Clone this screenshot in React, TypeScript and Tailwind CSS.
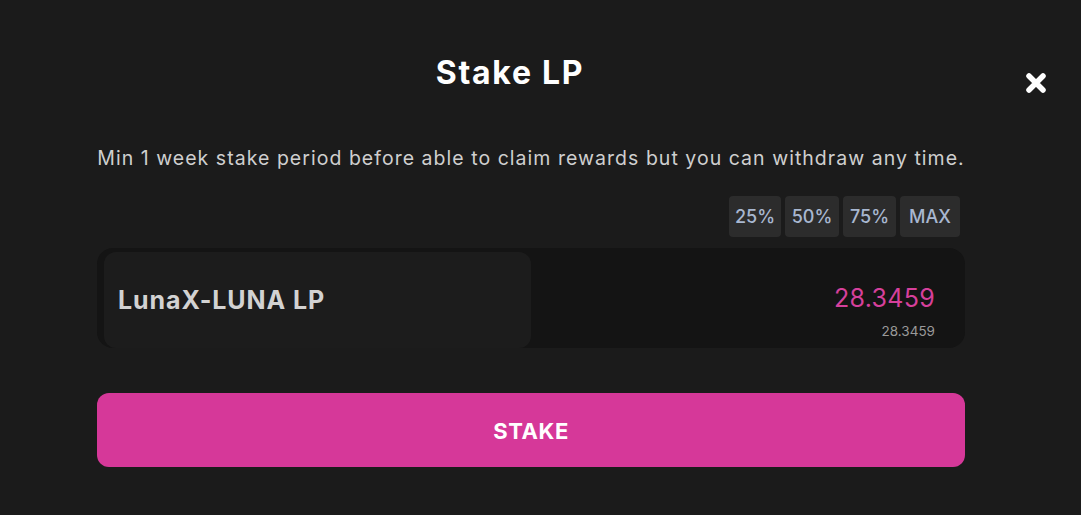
export default function App() {
  return (
    <div className="w-[1081px] h-[515px] bg-[#1b1b1b] font-['Inter',sans-serif] relative overflow-hidden">
      {/* Close */}
      <button className="absolute left-[1023px] top-[70px] w-[26px] h-[26px] flex items-center justify-center text-white">
        <svg width="22" height="22" viewBox="0 0 22 22">
          <path d="M4 4 L18 18 M18 4 L4 18" stroke="white" strokeWidth="5.5" strokeLinecap="round" />
        </svg>
      </button>

      <div className="flex flex-col pl-[97px] pr-[116px] pt-[52px]">
        <h2 className="text-center text-[32px] leading-[42px] font-bold text-white tracking-[1.7px] pr-[42px]">Stake LP</h2>

        <p className="mt-[50px] text-center text-[19.5px] leading-[28px] text-[#cfcfcf] tracking-[1.03px] whitespace-nowrap">
          Min 1 week stake period before able to claim rewards but you can withdraw any time.
        </p>

        {/* Percent buttons */}
        <div className="flex justify-end gap-[4px] mt-[24px] pr-[5px]">
          {[
            ['25%', 'w-[52px]'],
            ['50%', 'w-[54px]'],
            ['75%', 'w-[53px]'],
            ['MAX', 'w-[60px]'],
          ].map(([p, w]) => (
            <button
              key={p}
              className={`${w} h-[41px] rounded-[4px] bg-[#2c2c2c] text-[#a8b7d0] text-[18px] font-medium`}
            >
              {p}
            </button>
          ))}
        </div>

        {/* Input */}
        <div className="mt-[11px] h-[100px] rounded-[16px] bg-[#141414] flex pl-[7px] pt-[4px]">
          <div className="w-[427px] rounded-[12px] bg-[#1c1c1c] flex items-center pl-[14px]">
            <span className="text-[25px] font-bold text-[#d2d2d2] tracking-[0.9px] mt-[1px]">LunaX-LUNA LP</span>
          </div>
          <div className="flex-1 flex flex-col items-end pr-[30px] pt-[31px]">
            <span className="text-[25px] leading-[30px] text-[#d6409b] tracking-[0.3px]">28.3459</span>
            <span className="text-[13.5px] leading-[16px] mt-[10px] text-[#9a9a9a]">28.3459</span>
          </div>
        </div>

        {/* Stake button */}
        <button className="mt-[45px] h-[74px] rounded-[12px] bg-[#d63899] text-white text-[22px] font-bold tracking-[0.6px] pt-[2px]">
          STAKE
        </button>
      </div>
    </div>
  );
}
